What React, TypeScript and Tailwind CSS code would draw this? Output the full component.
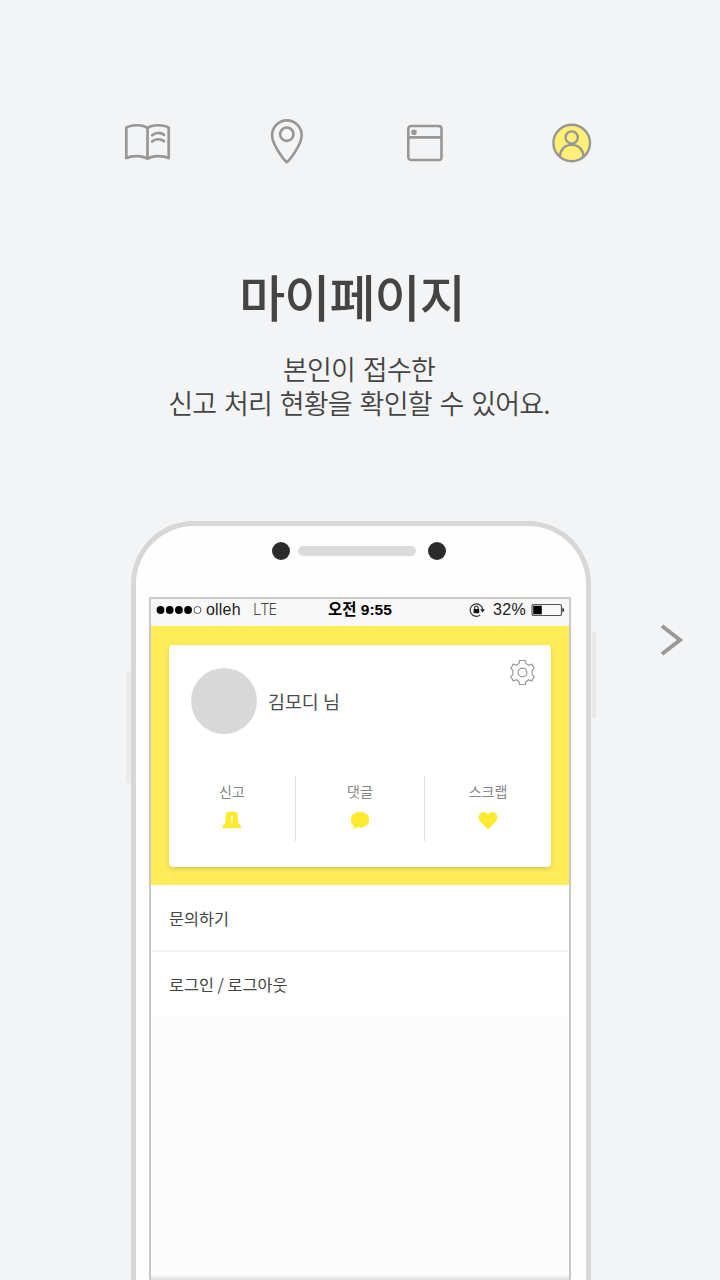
import React from "react";

function BookIcon() {
  return (
    <svg className="mt-[122px] ml-[124px] h-10 w-12 shrink-0" viewBox="0 0 48 40" fill="none" stroke="#979797" strokeWidth="2.7" strokeLinejoin="round" strokeLinecap="round">
      <path d="M23.5 6C19 2.400 7.500 2.400 2.300 5.600V36.200C7.500 33.200 18.500 33.200 23.500 36.900C28.500 33.200 39.500 33.200 44.700 36.200V5.600C39.500 2.400 28 2.400 23.500 6V36.600" />
      <path d="M28.200 13.200C31 10.300 37 10.300 40 12.800M28.200 19.500C31 16.600 37 16.600 40 19.100" />
    </svg>
  );
}

function PinIcon() {
  return (
    <svg className="mt-[117px] ml-[97px] h-12 w-9 shrink-0" viewBox="0 0 36 48" fill="none" stroke="#979797" strokeWidth="2.600" strokeLinejoin="round">
      <path d="M17.800 45.300C15.500 43.500 3.100 28 3.100 18.200A14.800 14.800 0 0 1 32.700 18.200C32.700 28 20.100 43.500 17.800 45.300Z" />
      <circle cx="17.800" cy="17.200" r="6.700" />
    </svg>
  );
}

function WindowIcon() {
  return (
    <svg className="mt-[122px] ml-[100px] h-10 w-10 shrink-0" viewBox="0 0 40 40" fill="none" stroke="#979797" strokeWidth="2.600">
      <rect x="3.300" y="4" width="33.200" height="34" rx="2.800" />
      <path d="M3.300 15.400H36.500" />
      <circle cx="9" cy="10.200" r="2.800" fill="#979797" stroke="none" />
    </svg>
  );
}

function UserIcon() {
  return (
    <svg className="mt-[122px] ml-[106px] h-[42px] w-[42px] shrink-0" viewBox="0 0 42 42" fill="none" stroke="#979797" strokeWidth="2.400">
      <circle cx="20.700" cy="21" r="18.300" fill="#fff075" />
      <circle cx="20.700" cy="15.500" r="6.100" />
      <path d="M8.900 34.800C8.900 28 13.500 22.900 20.700 22.900S32.500 28 32.500 34.800" />
    </svg>
  );
}

function LockRotationIcon() {
  return (
    <svg className="ml-[76px] h-4 w-[17px] shrink-0" viewBox="0 0 17 16" fill="none" stroke="#333" strokeWidth="1.200">
      <path d="M11.300 12.900A6.200 6.200 0 1 1 13.600 7.500" />
      <path d="M11.200 7.200H16L13.600 10.500Z" fill="#222" stroke="none" />
      <rect x="4.600" y="7" width="5.600" height="4.200" fill="#111" stroke="none" />
      <path d="M5.600 7.200V5.800A1.800 1.800 0 0 1 9.200 5.800V7.200" />
    </svg>
  );
}

function BatteryIcon() {
  return (
    <svg className="ml-[3px] h-[14px] w-[34px] shrink-0" viewBox="0 0 34 14">
      <rect x="1" y="1.500" width="29.500" height="11" rx="1.600" fill="none" stroke="#555" strokeWidth="1.200" />
      <rect x="2.200" y="2.700" width="8.600" height="8.600" fill="#000" />
      <path d="M31.500 4.800C33.600 5.600 33.600 8.500 31.500 9.300Z" fill="#111" />
    </svg>
  );
}

function GearIcon() {
  return (
    <svg className="mt-[14px] mr-[15px] h-[27px] w-[27px]" viewBox="-13.500 -13.500 27 27" fill="none" stroke="#979797" strokeWidth="1.200" strokeLinejoin="round">
      <path d="M-2.900-12H2.900L3.600-8.800Q5-8.300 6.200-7.200L9.200-8.400L11.700-4.200L9.500-2.100Q10 0 9.500 2.100L11.700 4.200L9.200 8.400L6.200 7.200Q5 8.300 3.600 8.800L2.900 12H-2.900L-3.600 8.800Q-5 8.300-6.200 7.200L-9.200 8.400L-11.700 4.200L-9.500 2.100Q-10 0-9.500-2.100L-11.700-4.200L-9.200-8.400L-6.200-7.200Q-5-8.300-3.600-8.800Z" />
      <circle r="4.400" />
    </svg>
  );
}

function SirenIcon() {
  return (
    <svg className="h-5 w-5" viewBox="0 0 20 20" fill="#ffea32">
      <path d="M4 4.400Q4.300 1.700 7 1.700H12.500Q15.200 1.700 15.500 4.400L16.300 13.600Q18.700 14.400 19.200 18.200H.3Q.8 14.400 3.200 13.600Z" />
      <path d="M9.900 6V10.200M9.900 11.200V12.800" stroke="#fff" strokeWidth="1.400" />
    </svg>
  );
}

function BubbleIcon() {
  return (
    <svg className="h-5 w-5" viewBox="0 0 20 20" fill="#ffea32">
      <path d="M10 1.800C4.600 1.800.8 5.400.8 9.700C.8 12.500 2.100 14.800 4.200 16.200Q4 17.600 2 18.700Q5.300 18.700 7 17.200Q8.500 17.600 10 17.600C15.500 17.600 19.200 14 19.200 9.700S15.500 1.800 10 1.800Z" />
    </svg>
  );
}

function HeartIcon() {
  return (
    <svg className="h-5 w-5" viewBox="0 0 20 20" fill="#ffea32">
      <path d="M10 19.200L2.300 11.800C.2 9.500.2 6 1.800 3.800C4 1.200 8 1.100 10 4.400C12 1.100 16 1.200 18.200 3.800C19.900 6 19.800 9.500 17.700 11.800Z" />
    </svg>
  );
}

function Stat({ label, children }: { label: string; children: React.ReactNode }) {
  return (
    <div className="flex h-[65px] flex-col items-center pt-[4px]">
      <span className="text-[14px] leading-[22px] text-[#858585]">{label}</span>
      <span className="mt-[8px]">{children}</span>
    </div>
  );
}

function StatusBar() {
  return (
    <div className="flex h-[27px] shrink-0 items-center pb-[5px] pl-[5px] font-['Liberation_Sans','Noto_Sans_CJK_KR',sans-serif] text-[16px] text-[#222]">
      <svg className="h-3 w-[47px] shrink-0" viewBox="0 0 47 12">
        <g fill="#000">
          <circle cx="4.500" cy="6" r="3.900" /><circle cx="13.700" cy="6" r="3.900" /><circle cx="22.900" cy="6" r="3.900" /><circle cx="32.100" cy="6" r="3.900" />
        </g>
        <circle cx="41.500" cy="6" r="3.500" fill="#fff" stroke="#555" />
      </svg>
      <span className="ml-[3px] w-[47px] whitespace-nowrap tracking-[0.200px]">olleh</span>
      <span className="w-[75px] font-['Open_Sans',sans-serif] text-[15.500px] font-light tracking-[-0.300px]">LTE</span>
      <span className="w-[65px] whitespace-nowrap text-[15.500px] font-bold text-black">오전 9:55</span>
      <LockRotationIcon />
      <span className="ml-[7px] w-[35px] whitespace-nowrap tracking-[0.300px]">32%</span>
      <BatteryIcon />
    </div>
  );
}

export default function App() {
  return (
    <main className="relative h-[1280px] w-[720px] overflow-hidden bg-[#f3f4f6] font-['Noto_Sans_CJK_KR',sans-serif] text-[#444]">
      <nav className="flex h-[259px] items-start">
        <BookIcon />
        <PinIcon />
        <WindowIcon />
        <UserIcon />
      </nav>
      <header className="h-[262px] text-center">
        <h1 className="mr-[16px] text-[50px] leading-[72px] font-medium tracking-[-0.900px]">마이페이지</h1>
        <p className="mt-[21px] mr-[2px] text-[27px] leading-[34px] font-[350] tracking-[-0.800px] whitespace-nowrap [word-spacing:2.500px]">
          본인이 접수한
          <br />
          신고 처리 현황을 확인할 수 있어요.
        </p>
      </header>
      <section className="ml-[126px] flex h-[759px] w-[470px] items-start">
        <div className="mt-[150px] h-[112px] w-[5px] shrink-0 rounded-l-[2px] bg-[#ebebec]" />
        <div className="h-[800px] w-[460px] shrink-0 rounded-t-[63px] border-[5px] border-b-0 border-[#d7d7d7] bg-[#fefefe]">
          <div className="flex h-[71px] items-start pt-4 pl-[136px]">
            <div className="h-[18px] w-[18px] rounded-full bg-[#2b2b2b]" />
            <div className="mt-1 ml-2 h-[10px] w-[118px] rounded-full bg-[#dcdbda]" />
            <div className="ml-3 h-[18px] w-[18px] rounded-full bg-[#2b2b2b]" />
          </div>
          <div className="ml-[13px] flex h-[700px] w-[422px] flex-col border-2 border-[#c8c8c8] bg-[#f8f8f8]">
            <StatusBar />
            <div className="h-[259px] shrink-0 bg-[#ffec59] px-[18px] pt-[19px]">
              <div className="h-[222px] w-[382px] rounded-[4px] bg-white shadow-[0_2px_4px_rgba(0,0,0,0.16)]">
                <div className="flex h-[131px] items-start">
                  <div className="mt-[23px] ml-[22px] h-[66px] w-[66px] shrink-0 rounded-full bg-[#d8d8d8]" />
                  <div className="mt-[42px] ml-[11px] grow text-[18.400px] leading-[28px] text-[#4b4b4b]">김모디 님</div>
                  <GearIcon />
                </div>
                <div className="grid grid-cols-[127px_129px_126px] divide-x divide-[#dfdfdf]">
                  <Stat label="신고"><SirenIcon /></Stat>
                  <Stat label="댓글"><BubbleIcon /></Stat>
                  <Stat label="스크랩"><HeartIcon /></Stat>
                </div>
              </div>
            </div>
            <div className="h-[67px] shrink-0 border-b-2 border-[#f3f3f3] bg-white pl-[18px] text-[16.300px] leading-[66px]">문의하기</div>
            <div className="h-[64px] shrink-0 bg-white pl-[18px] text-[16.300px] leading-[64px]">로그인 / 로그아웃</div>
            <div className="h-[264px] shrink-0 bg-gradient-to-b from-[#fcfcfc] from-98% to-[#e0e0e0]" />
          </div>
        </div>
        <div className="mt-[111px] ml-px h-[86px] w-1 shrink-0 rounded-[2px] bg-[#e8e8e9]" />
      </section>
      <svg className="absolute top-[622px] left-[658px] h-9 w-7" viewBox="0 0 28 36" fill="none" stroke="#999" strokeWidth="4">
        <path d="M4 4L22 18L4 32" />
      </svg>
    </main>
  );
}
